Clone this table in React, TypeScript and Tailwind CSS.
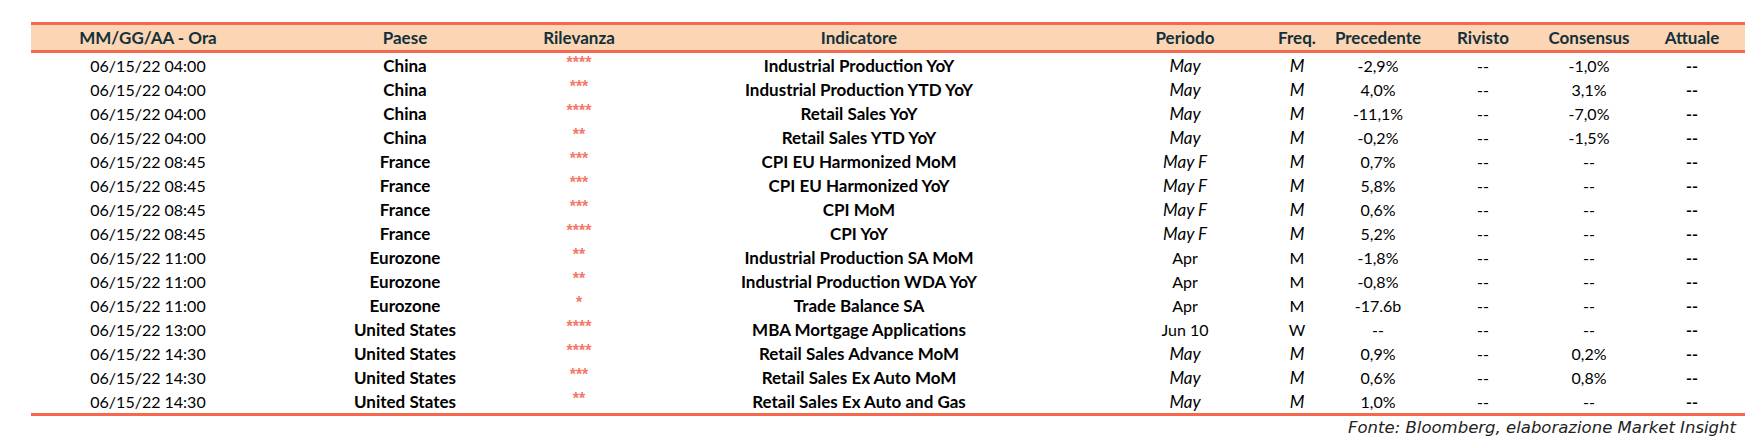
import React from "react";

type Row = {
  date: string;
  country: string;
  stars: number;
  indicator: string;
  period: string;
  freq: string;
  prev: string;
  revised: string;
  consensus: string;
  actual: string;
};

const ROWS: Row[] = [
  { date: "06/15/22 04:00", country: "China", stars: 4, indicator: "Industrial Production YoY", period: "May", freq: "M", prev: "-2,9%", revised: "--", consensus: "-1,0%", actual: "--" },
  { date: "06/15/22 04:00", country: "China", stars: 3, indicator: "Industrial Production YTD YoY", period: "May", freq: "M", prev: "4,0%", revised: "--", consensus: "3,1%", actual: "--" },
  { date: "06/15/22 04:00", country: "China", stars: 4, indicator: "Retail Sales YoY", period: "May", freq: "M", prev: "-11,1%", revised: "--", consensus: "-7,0%", actual: "--" },
  { date: "06/15/22 04:00", country: "China", stars: 2, indicator: "Retail Sales YTD YoY", period: "May", freq: "M", prev: "-0,2%", revised: "--", consensus: "-1,5%", actual: "--" },
  { date: "06/15/22 08:45", country: "France", stars: 3, indicator: "CPI EU Harmonized MoM", period: "May F", freq: "M", prev: "0,7%", revised: "--", consensus: "--", actual: "--" },
  { date: "06/15/22 08:45", country: "France", stars: 3, indicator: "CPI EU Harmonized YoY", period: "May F", freq: "M", prev: "5,8%", revised: "--", consensus: "--", actual: "--" },
  { date: "06/15/22 08:45", country: "France", stars: 3, indicator: "CPI MoM", period: "May F", freq: "M", prev: "0,6%", revised: "--", consensus: "--", actual: "--" },
  { date: "06/15/22 08:45", country: "France", stars: 4, indicator: "CPI YoY", period: "May F", freq: "M", prev: "5,2%", revised: "--", consensus: "--", actual: "--" },
  { date: "06/15/22 11:00", country: "Eurozone", stars: 2, indicator: "Industrial Production SA MoM", period: "Apr", freq: "M", prev: "-1,8%", revised: "--", consensus: "--", actual: "--" },
  { date: "06/15/22 11:00", country: "Eurozone", stars: 2, indicator: "Industrial Production WDA YoY", period: "Apr", freq: "M", prev: "-0,8%", revised: "--", consensus: "--", actual: "--" },
  { date: "06/15/22 11:00", country: "Eurozone", stars: 1, indicator: "Trade Balance SA", period: "Apr", freq: "M", prev: "-17.6b", revised: "--", consensus: "--", actual: "--" },
  { date: "06/15/22 13:00", country: "United States", stars: 4, indicator: "MBA Mortgage Applications", period: "Jun 10", freq: "W", prev: "--", revised: "--", consensus: "--", actual: "--" },
  { date: "06/15/22 14:30", country: "United States", stars: 4, indicator: "Retail Sales Advance MoM", period: "May", freq: "M", prev: "0,9%", revised: "--", consensus: "0,2%", actual: "--" },
  { date: "06/15/22 14:30", country: "United States", stars: 3, indicator: "Retail Sales Ex Auto MoM", period: "May", freq: "M", prev: "0,6%", revised: "--", consensus: "0,8%", actual: "--" },
  { date: "06/15/22 14:30", country: "United States", stars: 2, indicator: "Retail Sales Ex Auto and Gas", period: "May", freq: "M", prev: "1,0%", revised: "--", consensus: "--", actual: "--" },
];

const HEADERS = ["MM/GG/AA - Ora", "Paese", "Rilevanza", "Indicatore", "Periodo", "Freq.", "Precedente", "Rivisto", "Consensus", "Attuale"];

// fixed widths so each column sits on the same centre as the sheet
const GRID = "grid grid-cols-[234px_280px_68px_492px_160px_64px_98px_112px_100px_106px]";

const Cell = ({ children, className = "" }: { children: React.ReactNode; className?: string }) => (
  <div className={`flex items-center justify-center whitespace-nowrap ${className}`}>{children}</div>
);

export default function App() {
  return (
    <div className="w-[1758px] h-[439px] bg-white pt-[22px] pl-[31px] font-['Lato','Liberation_Sans',sans-serif] text-[16px] text-black">
      <div className="w-[1714px]">
        {/* header */}
        <div className={`${GRID} h-[31px] bg-[#fcd5b4] border-y-[3px] border-[#f4694e] font-bold text-[17px] text-[#13303a]`}>
          {HEADERS.map((h) => (
            <Cell key={h}>{h}</Cell>
          ))}
        </div>

        {/* rows */}
        <div className="border-b-[3px] border-[#f4694e]">
          {ROWS.map((r, i) => {
            const it = r.period.startsWith("May") ? "italic text-[17px]" : "";
            return (
              <div key={i} className={`${GRID} h-[24px]`}>
                <Cell>{r.date}</Cell>
                <Cell className="font-bold text-[17px]">{r.country}</Cell>
                <Cell className="font-['Liberation_Sans',sans-serif] font-bold text-[#f57868] text-[16px] leading-none pb-[5px]">
                  {"*".repeat(r.stars)}
                </Cell>
                <Cell className="font-bold text-[17px]">{r.indicator}</Cell>
                <Cell className={it}>{r.period}</Cell>
                <Cell className={it}>{r.freq}</Cell>
                <Cell>{r.prev}</Cell>
                <Cell>{r.revised}</Cell>
                <Cell>{r.consensus}</Cell>
                <Cell className="font-bold">{r.actual}</Cell>
              </div>
            );
          })}
        </div>

        <div className="flex justify-end pr-[9px] font-['DejaVu_Sans',sans-serif] italic text-[16.5px] leading-[24px] text-[#222]">
          Fonte: Bloomberg, elaborazione Market Insight
        </div>
      </div>
    </div>
  );
}
